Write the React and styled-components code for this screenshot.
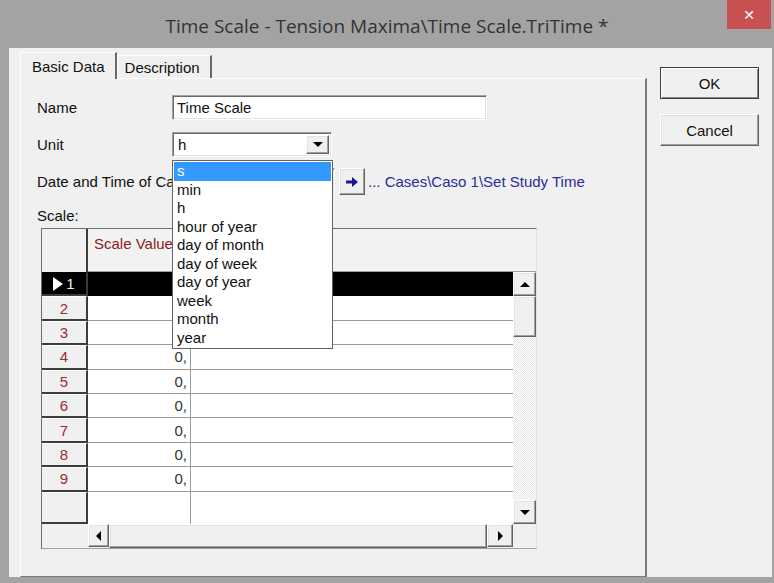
import React from "react";
import styled, { createGlobalStyle, css } from "styled-components";

const GlobalStyle = createGlobalStyle`
  html, body { margin: 0; padding: 0; background: #a3a3a3; }
  body { font-family: "Liberation Sans", Arial, sans-serif; font-size: 15px; color: #111; }
  * { box-sizing: border-box; }
`;

const raised = css`
  background: #f0f0f0;
  border: 1px solid;
  border-color: #ffffff #646464 #646464 #ffffff;
  box-shadow: inset -1px -1px 0 #a0a0a0, inset 1px 1px 0 #e3e3e3;
`;

const sunken = css`
  background: #ffffff;
  border: 1px solid;
  border-color: #a0a0a0 #ffffff #ffffff #a0a0a0;
  box-shadow: inset 1px 1px 0 #696969, inset -1px -1px 0 #e3e3e3;
`;

const Window = styled.div`
  width: 774px;
  height: 583px;
  background: #a3a3a3;
  display: flex;
  flex-direction: column;
  padding: 0 2px 6px 9px;
`;

const TitleBar = styled.div`
  flex: none;
  height: 48px;
  margin: 0 -2px 0 -9px;
  display: grid;
  grid-template-columns: 1fr auto 1fr;
  align-items: start;
`;

const Title = styled.div`
  grid-column: 2;
  padding-top: 13px;
  font-family: "Open Sans", "Noto Sans", sans-serif;
  font-size: 19px;
  color: #333333;
  white-space: nowrap;
`;

const CloseButton = styled.div`
  grid-column: 3;
  justify-self: end;
  width: 44px;
  height: 29px;
  margin-right: 3px;
  background: #c75050;
  color: #fff;
  font-family: "DejaVu Sans", sans-serif;
  font-size: 14px;
  font-weight: bold;
  display: flex;
  align-items: center;
  justify-content: center;
`;

const Client = styled.div`
  flex: 1;
  background: #f0f0f0;
  display: flex;
  padding: 4px 0 0 11px;
`;

const TabArea = styled.div`
  width: 627px;
  display: flex;
  flex-direction: column;
`;

const TabStrip = styled.div`
  display: flex;
  align-items: flex-end;
  height: 26px;
`;

const Tab = styled.div`
  height: ${(p) => (p.$active ? 27 : 23)}px;
  margin-bottom: ${(p) => (p.$active ? -1 : 0)}px;
  padding: ${(p) => (p.$active ? "0 10px 0 11px" : "0 10px 0 7px")};
  background: #f0f0f0;
  border-top: 1px solid #ffffff;
  border-left: 1px solid #ffffff;
  border-right: 2px solid #696969;
  display: flex;
  align-items: center;
  position: relative;
  z-index: ${(p) => (p.$active ? 1 : 0)};
  white-space: nowrap;
`;

const Panel = styled.div`
  flex: 1;
  border-top: 1px solid #ffffff;
  border-left: 1px solid #ffffff;
  border-right: 2px solid #7a7a7a;
  border-bottom: 1px solid #7a7a7a;
  padding: 16px 0 0 16px;
  display: flex;
  flex-direction: column;
`;

const FieldRow = styled.div`
  display: flex;
  align-items: center;
  height: ${(p) => p.$h}px;
  margin-bottom: ${(p) => p.$mb || 0}px;
`;

const Label = styled.div`
  width: 135px;
  flex: none;
  white-space: nowrap;
`;

const TextInput = styled.div`
  ${sunken};
  width: ${(p) => p.$w}px;
  height: 100%;
  padding-left: 4px;
  display: flex;
  align-items: center;
`;

const ComboWrap = styled.div`
  position: relative;
  width: 160px;
  height: 100%;
`;

const ComboField = styled.div`
  ${sunken};
  width: 100%;
  height: 100%;
  display: flex;
  align-items: center;
  padding: 2px 2px 2px 5px;
`;

const ComboText = styled.div`
  flex: 1;
`;

const ComboButton = styled.div`
  ${raised};
  width: 23px;
  height: 100%;
  display: flex;
  align-items: center;
  justify-content: center;
`;

const Arrow = styled.span`
  width: 0;
  height: 0;
  display: inline-block;
  ${(p) =>
    p.$dir === "down" &&
    css`
      border-left: 5px solid transparent;
      border-right: 5px solid transparent;
      border-top: 5px solid #000;
    `}
  ${(p) =>
    p.$dir === "up" &&
    css`
      border-left: 5px solid transparent;
      border-right: 5px solid transparent;
      border-bottom: 5px solid #000;
    `}
  ${(p) =>
    p.$dir === "left" &&
    css`
      border-top: 5px solid transparent;
      border-bottom: 5px solid transparent;
      border-right: 5px solid #000;
    `}
  ${(p) =>
    p.$dir === "right" &&
    css`
      border-top: 5px solid transparent;
      border-bottom: 5px solid transparent;
      border-left: 5px solid #000;
    `}
`;

const DropList = styled.div`
  position: absolute;
  top: 28px;
  left: 0;
  width: 161px;
  background: #ffffff;
  border: 1px solid #646464;
  padding: 1px;
  z-index: 10;
`;

const DropItem = styled.div`
  height: 18.5px;
  line-height: 18px;
  padding-left: 3px;
  background: ${(p) => (p.$selected ? "#3399ff" : "transparent")};
  color: ${(p) => (p.$selected ? "#ffffff" : "#111")};
  white-space: nowrap;
`;

const LinkButton = styled.div`
  ${raised};
  width: 26px;
  height: 27px;
  margin-left: 4px;
  display: flex;
  align-items: center;
  justify-content: center;
`;

const LinkText = styled.div`
  margin-left: 3px;
  color: #2b2b9a;
  white-space: nowrap;
`;

const ScaleLabel = styled.div`
  margin-top: 11px;
  height: 20px;
  line-height: 20px;
`;

const Grid = styled.div`
  margin: 2px 0 0 4px;
  width: 496px;
  height: 321px;
  border: 1px solid;
  border-color: #6d6d6d #e3e3e3 #a0a0a0 #6d6d6d;
  background: #f0f0f0;
  display: grid;
  grid-template-columns: 46px 103px 1fr 23px;
  grid-template-rows: 43px repeat(9, 24.4px) 1fr 24px;
`;

const Corner = styled.div`
  background: #f0f0f0;
  border-right: 2px solid #3c3c3c;
`;

const HeadCell = styled.div`
  grid-column: ${(p) => p.$col};
  background: #f2f2f2;
  border-bottom: 1px solid #a0a0a0;
  color: #8b1c1c;
  padding: 6px 0 0 6px;
  white-space: nowrap;
`;

const RowHead = styled.div`
  background: ${(p) => (p.$selected ? "#000" : "#f0f0f0")};
  color: ${(p) => (p.$selected ? "#e8f5e8" : "#9b2d2d")};
  border-right: 2px solid #3c3c3c;
  border-bottom: 2px solid #3c3c3c;
  border-top: 1px solid ${(p) => (p.$selected ? "#000" : "#ffffff")};
  display: flex;
  align-items: center;
  justify-content: center;
  gap: 3px;
`;

const Pointer = styled.span`
  width: 0;
  height: 0;
  border-top: 7px solid transparent;
  border-bottom: 7px solid transparent;
  border-left: 10px solid #ffffff;
`;

const Cell = styled.div`
  background: ${(p) => (p.$selected ? "#000" : "#ffffff")};
  border-bottom: 1px solid ${(p) => (p.$selected ? "#000" : "#9a9a9a")};
  border-right: ${(p) => (p.$divider ? `1px solid ${p.$selected ? "#000" : "#9a9a9a"}` : "none")};
  color: #333;
  display: flex;
  align-items: center;
  justify-content: flex-end;
  padding-right: 3px;
`;

const EmptyHead = styled.div`
  background: #f0f0f0;
  border-right: 2px solid #3c3c3c;
  border-bottom: 2px solid #3c3c3c;
  border-top: 1px solid #ffffff;
`;

const EmptyCell = styled.div`
  background: #ffffff;
  border-right: ${(p) => (p.$divider ? "1px solid #9a9a9a" : "none")};
`;

const VScroll = styled.div`
  grid-column: 4;
  grid-row: 2 / 12;
  display: flex;
  flex-direction: column;
`;

const ScrollButton = styled.div`
  ${raised};
  flex: none;
  width: ${(p) => p.$w || 23}px;
  height: ${(p) => p.$h || 24}px;
  display: flex;
  align-items: center;
  justify-content: center;
`;

const Thumb = styled.div`
  ${raised};
  flex: ${(p) => (p.$grow ? 1 : "none")};
  height: ${(p) => (p.$grow ? "auto" : "41px")};
`;

const Track = styled.div`
  flex: 1;
  background-color: #f4f4f4;
  background-image: repeating-conic-gradient(#ffffff 0 25%, #e6e6e6 0 50%);
  background-size: 2px 2px;
`;

const HScroll = styled.div`
  grid-column: 2 / 4;
  display: flex;
  align-items: stretch;
`;

const ButtonColumn = styled.div`
  margin-left: 13px;
  padding-top: 15px;
  display: flex;
  flex-direction: column;
  gap: 15px;
`;

const DialogButton = styled.div`
  ${raised};
  width: 99px;
  height: 32px;
  display: flex;
  align-items: center;
  justify-content: center;
  ${(p) =>
    p.$default &&
    css`
      border-color: #3c3c3c;
      box-shadow: inset 1px 1px 0 #ffffff, inset -1px -1px 0 #8a8a8a;
    `}
`;

const units = [
  "s",
  "min",
  "h",
  "hour of year",
  "day of month",
  "day of week",
  "day of year",
  "week",
  "month",
  "year",
];

const rows = [1, 2, 3, 4, 5, 6, 7, 8, 9];

export default function App() {
  return (
    <>
      <GlobalStyle />
      <Window>
        <TitleBar>
          <Title>Time Scale - Tension Maxima\Time Scale.TriTime *</Title>
          <CloseButton>✕</CloseButton>
        </TitleBar>
        <Client>
          <TabArea>
            <TabStrip>
              <Tab $active>Basic Data</Tab>
              <Tab>Description</Tab>
            </TabStrip>
            <Panel>
              <FieldRow $h={25} $mb={12}>
                <Label>Name</Label>
                <TextInput $w={315}>Time Scale</TextInput>
              </FieldRow>
              <FieldRow $h={25} $mb={11}>
                <Label>Unit</Label>
                <ComboWrap>
                  <ComboField>
                    <ComboText>h</ComboText>
                    <ComboButton>
                      <Arrow $dir="down" />
                    </ComboButton>
                  </ComboField>
                  <DropList>
                    {units.map((u, i) => (
                      <DropItem key={u} $selected={i === 0}>
                        {u}
                      </DropItem>
                    ))}
                  </DropList>
                </ComboWrap>
              </FieldRow>
              <FieldRow $h={27}>
                <Label>Date and Time of Calculation</Label>
                <TextInput $w={163} />
                <LinkButton>
                  <svg width="12" height="10" viewBox="0 0 12 10">
                    <path d="M0 3.5h6V0l6 5-6 5V6.5H0z" fill="#1a1a8c" />
                  </svg>
                </LinkButton>
                <LinkText>... Cases\Caso 1\Set Study Time</LinkText>
              </FieldRow>
              <ScaleLabel>Scale:</ScaleLabel>
              <Grid>
                <Corner />
                <HeadCell $col={2}>Scale Value</HeadCell>
                <HeadCell $col="3 / 5" />
                {rows.map((n) => {
                  const sel = n === 1;
                  return (
                    <React.Fragment key={n}>
                      <RowHead $selected={sel}>
                        {sel && <Pointer />}
                        {n}
                      </RowHead>
                      <Cell $selected={sel} $divider>
                        {sel ? "" : "0,"}
                      </Cell>
                      <Cell $selected={sel} />
                    </React.Fragment>
                  );
                })}
                <EmptyHead />
                <EmptyCell $divider />
                <EmptyCell />
                <VScroll>
                  <ScrollButton>
                    <Arrow $dir="up" />
                  </ScrollButton>
                  <Thumb />
                  <Track />
                  <ScrollButton>
                    <Arrow $dir="down" />
                  </ScrollButton>
                </VScroll>
                <div />
                <HScroll>
                  <ScrollButton $w={21} $h={23}>
                    <Arrow $dir="left" />
                  </ScrollButton>
                  <Thumb $grow />
                  <ScrollButton $w={26} $h={23}>
                    <Arrow $dir="right" />
                  </ScrollButton>
                </HScroll>
                <div />
              </Grid>
            </Panel>
          </TabArea>
          <ButtonColumn>
            <DialogButton $default>OK</DialogButton>
            <DialogButton>Cancel</DialogButton>
          </ButtonColumn>
        </Client>
      </Window>
    </>
  );
}
